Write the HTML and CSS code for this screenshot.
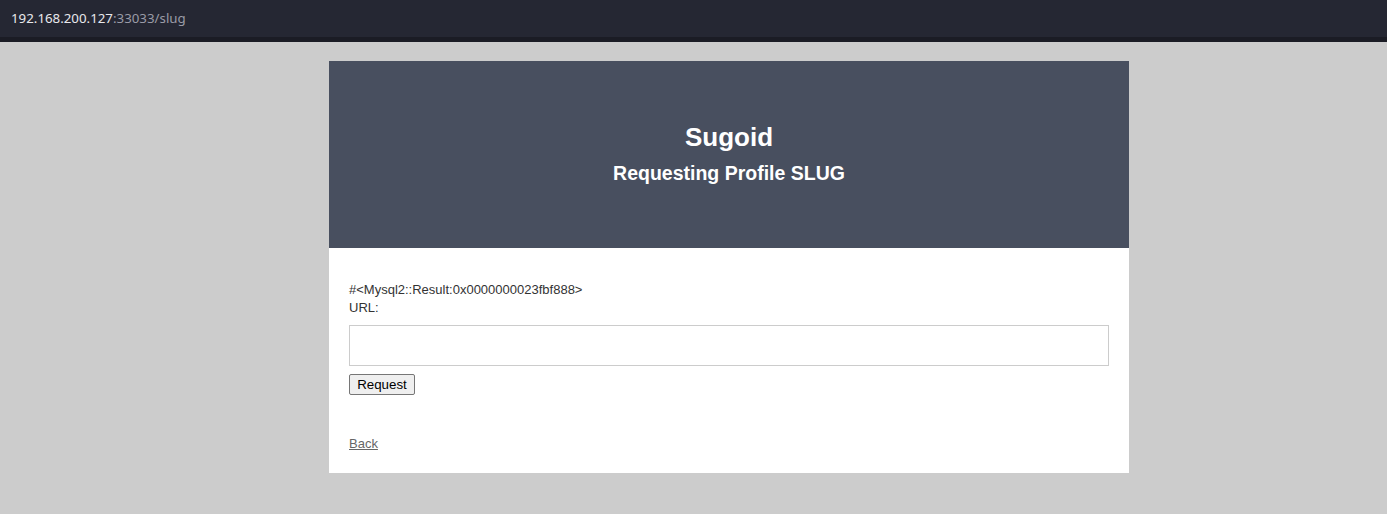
FILE: index.html
```html
<!DOCTYPE html>
<html>
<head>
<meta charset="utf-8">
<title>Sugoid</title>
<link rel="stylesheet" href="styles.css">
</head>
<body>
<div class="urlbar"><span class="host">192.168.200.127</span><span class="rest">:33033/slug</span></div>
<div class="card">
  <div class="header">
    <h1 class="title">Sugoid</h1>
    <h2 class="subtitle">Requesting Profile SLUG</h2>
  </div>
  <div class="content">
    <div class="line">#&lt;Mysql2::Result:0x0000000023fbf888&gt;</div>
    <div class="line">URL:</div>
    <input class="url-input" type="text">
    <div class="btn-row"><button class="btn">Request</button></div>
    <a class="back" href="#">Back</a>
  </div>
</div>
</body>
</html>
```
FILE: styles.css
```css
html, body {
  margin: 0;
  padding: 0;
  background: #cccccc;
}
.urlbar {
  height: 37px;
  background: #252733;
  border-bottom: 5px solid #1b1c25;
  font-family: "Noto Sans", "DejaVu Sans", sans-serif;
  font-size: 13.3px;
  line-height: 37px;
  padding-left: 11px;
  box-sizing: content-box;
}
.host { color: #e8e8ec; }
.rest { color: #9a9ba6; }
.card {
  width: 800px;
  margin: 19px 0 0 329px;
  background: #ffffff;
  font-family: "Liberation Sans", Arial, sans-serif;
}
.header {
  height: 187px;
  box-sizing: border-box;
  padding-bottom: 2px;
  background: #484f5f;
  color: #ffffff;
  display: flex;
  flex-direction: column;
  align-items: center;
  justify-content: center;
  gap: 9px;
}
.title {
  margin: 0;
  font-size: 26px;
  line-height: 30px;
  font-weight: bold;
}
.subtitle {
  margin: 0;
  font-size: 19.5px;
  line-height: 24px;
  font-weight: bold;
}
.content {
  padding: 33px 20px 20px 20px;
  font-size: 13px;
  line-height: 18px;
  color: #333333;
}
.url-input {
  display: block;
  box-sizing: border-box;
  width: 760px;
  height: 41px;
  margin: 8px 0 0 0;
  border: 1px solid #cccccc;
  padding: 0 8px;
  font-family: "Liberation Sans", Arial, sans-serif;
}
.btn-row {
  margin-top: 8px;
  height: 21px;
}
.btn {
  height: 21px;
  width: 66px;
  padding: 0;
  font-family: "Liberation Sans", Arial, sans-serif;
  font-size: 13.33px;
  color: #000;
  background: #efefef;
  border: 1px solid #767676;
  border-radius: 2px;
}
.back {
  display: block;
  margin-top: 40px;
  color: #666666;
  text-decoration: underline;
}
```
